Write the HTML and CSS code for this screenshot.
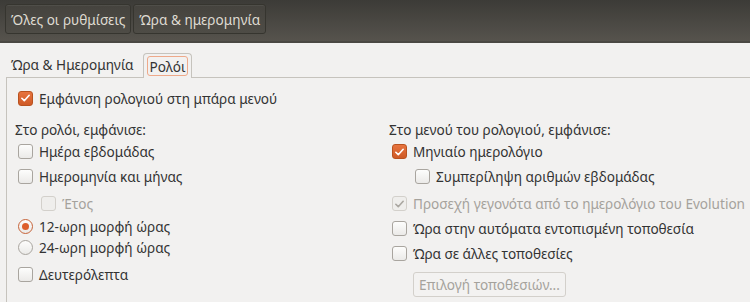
FILE: index.html
```html
<!DOCTYPE html>
<html lang="el">
<head>
  <meta charset="UTF-8">
  <title>Ώρα & ημερομηνία</title>
  <link rel="stylesheet" href="styles.css">
</head>
<body>
  <header class="toolbar">
    <button class="tool-btn">Όλες οι ρυθμίσεις</button>
    <button class="tool-btn">Ώρα &amp; ημερομηνία</button>
  </header>

  <div class="notebook">
    <div class="tabs">
      <div class="tab">Ώρα &amp; Ημερομηνία</div>
      <div class="tab active"><span class="focus">Ρολόι</span></div>
    </div>

    <div class="page">
      <label class="row first">
        <span class="check on"><svg viewBox="0 0 16 16"><path d="M3.5 8.3l3 3 6-6.6" /></svg></span>
        Εμφάνιση ρολογιού στη μπάρα μενού
      </label>

      <div class="columns">
        <div class="col">
          <div class="caption">Στο ρολόι, εμφάνισε:</div>
          <label class="row"><span class="check"></span>Ημέρα εβδομάδας</label>
          <label class="row"><span class="check"></span>Ημερομηνία και μήνας</label>
          <label class="row indent disabled nudge"><span class="check"></span>Έτος</label>
          <label class="row radio-row"><span class="radio on"></span>12-ωρη μορφή ώρας</label>
          <label class="row radio-row"><span class="radio"></span>24-ωρη μορφή ώρας</label>
          <label class="row small-gap"><span class="check"></span>Δευτερόλεπτα</label>
        </div>

        <div class="col">
          <div class="caption">Στο μενού του ρολογιού, εμφάνισε:</div>
          <label class="row"><span class="check on"><svg viewBox="0 0 16 16"><path d="M3.5 8.3l3 3 6-6.6" /></svg></span>Μηνιαίο ημερολόγιο</label>
          <label class="row indent"><span class="check"></span>Συμπερίληψη αριθμών εβδομάδας</label>
          <label class="row disabled nudge"><span class="check on"><svg viewBox="0 0 16 16"><path d="M3.5 8.3l3 3 6-6.6" /></svg></span>Προσεχή γεγονότα από το ημερολόγιο του Evolution</label>
          <label class="row"><span class="check"></span>Ώρα στην αυτόματα εντοπισμένη τοποθεσία</label>
          <label class="row"><span class="check"></span>Ώρα σε άλλες τοποθεσίες</label>
          <button class="btn" disabled>Επιλογή τοποθεσιών...</button>
        </div>
      </div>
    </div>
  </div>
</body>
</html>
```

FILE: styles.css
```css
:root {
  --text: #333333;
  --muted: #a5a29c;
  --bg: #f2f1f0;
  --border: #c6c3bd;
  --orange: #dd5f2c;
}
* { box-sizing: border-box; margin: 0; padding: 0; }
body {
  font-family: 'Noto Sans', 'DejaVu Sans', sans-serif;
  font-size: 13.6px;
  color: var(--text);
  background: var(--bg);
  width: 750px;
  height: 302px;
  overflow: hidden;
}

/* barra εργαλείων */
.toolbar {
  height: 43px;
  display: flex;
  gap: 2px;
  padding: 4px 5px 0;
  background: linear-gradient(#3c3b37, #56534d);
  border-bottom: 2px solid #4a4843;
}
.tool-btn {
  height: 30px;
  padding: 0 5px;
  font: inherit;
  color: #dfdbd2;
  background: linear-gradient(#45433e, #4e4c46);
  border: 1px solid #36352f;
  border-radius: 3px;
  box-shadow: inset 0 1px rgba(255,255,255,0.06);
}

/* notebook */
.notebook {
  padding: 10px 0 0 6px;
}
.tabs {
  display: flex;
  height: 24px;
  align-items: flex-end;
}
.tab {
  height: 24px;
  line-height: 24px;
  padding: 0 5px;
  margin-right: 4px;
}
.tab.active {
  position: relative;
  top: 1px;
  height: 25px;
  padding: 2px 3px 0;
  background: var(--bg);
  border: 1px solid var(--border);
  border-bottom: none;
  border-radius: 4px 4px 0 0;
  line-height: 19px;
}
.focus {
  display: block;
  padding: 0 2px;
  height: 20px;
  border: 1px solid #eea98a;
  border-radius: 3px;
}
.page {
  border-top: 1px solid var(--border);
  border-left: 1px solid var(--border);
  height: 230px;
  padding: 5px 0 0 8px;
}

.columns {
  display: grid;
  grid-template-columns: 374px 1fr;
  margin-top: 7px;
}
.caption {
  height: 19px;
  line-height: 19px;
}
.row {
  display: flex;
  align-items: center;
  height: 25px;
  padding-left: 3px;
  gap: 6px;
  white-space: nowrap;
}
.row.first { height: 30px; }
.row.indent { padding-left: 26px; }
.row.nudge { margin-top: 2px; }
.row.radio-row { height: 21px; }
.row.small-gap { margin-top: 4px; }
.disabled { color: var(--muted); }

.check, .radio {
  flex: none;
  width: 15px;
  height: 15px;
  border: 1px solid #a9a59f;
  background: linear-gradient(#fdfdfc, #ebeae8);
  border-radius: 3px;
  display: flex;
  align-items: center;
  justify-content: center;
}
.radio { border-radius: 50%; }
.check svg { width: 14px; height: 14px; }
.check path {
  fill: none;
  stroke: #fff;
  stroke-width: 2;
  stroke-linecap: round;
  stroke-linejoin: round;
}
.check.on {
  background: linear-gradient(#e7743f, #cf5a26);
  border-color: #b9521f;
}
.radio.on::after {
  content: "";
  width: 7px;
  height: 7px;
  border-radius: 50%;
  background: var(--orange);
}
.radio.on { border-color: #c7643a; }
.disabled .check {
  border-color: #d3d0cb;
  background: #efeeec;
}
.disabled .check.on path { stroke: #aaa7a1; }

.btn {
  margin: 6px 0 0 24px;
  height: 25px;
  padding: 0 5px;
  font: inherit;
  color: var(--muted);
  background: #f3f2f1;
  border: 1px solid #d3d0cb;
  border-radius: 3px;
}
```
